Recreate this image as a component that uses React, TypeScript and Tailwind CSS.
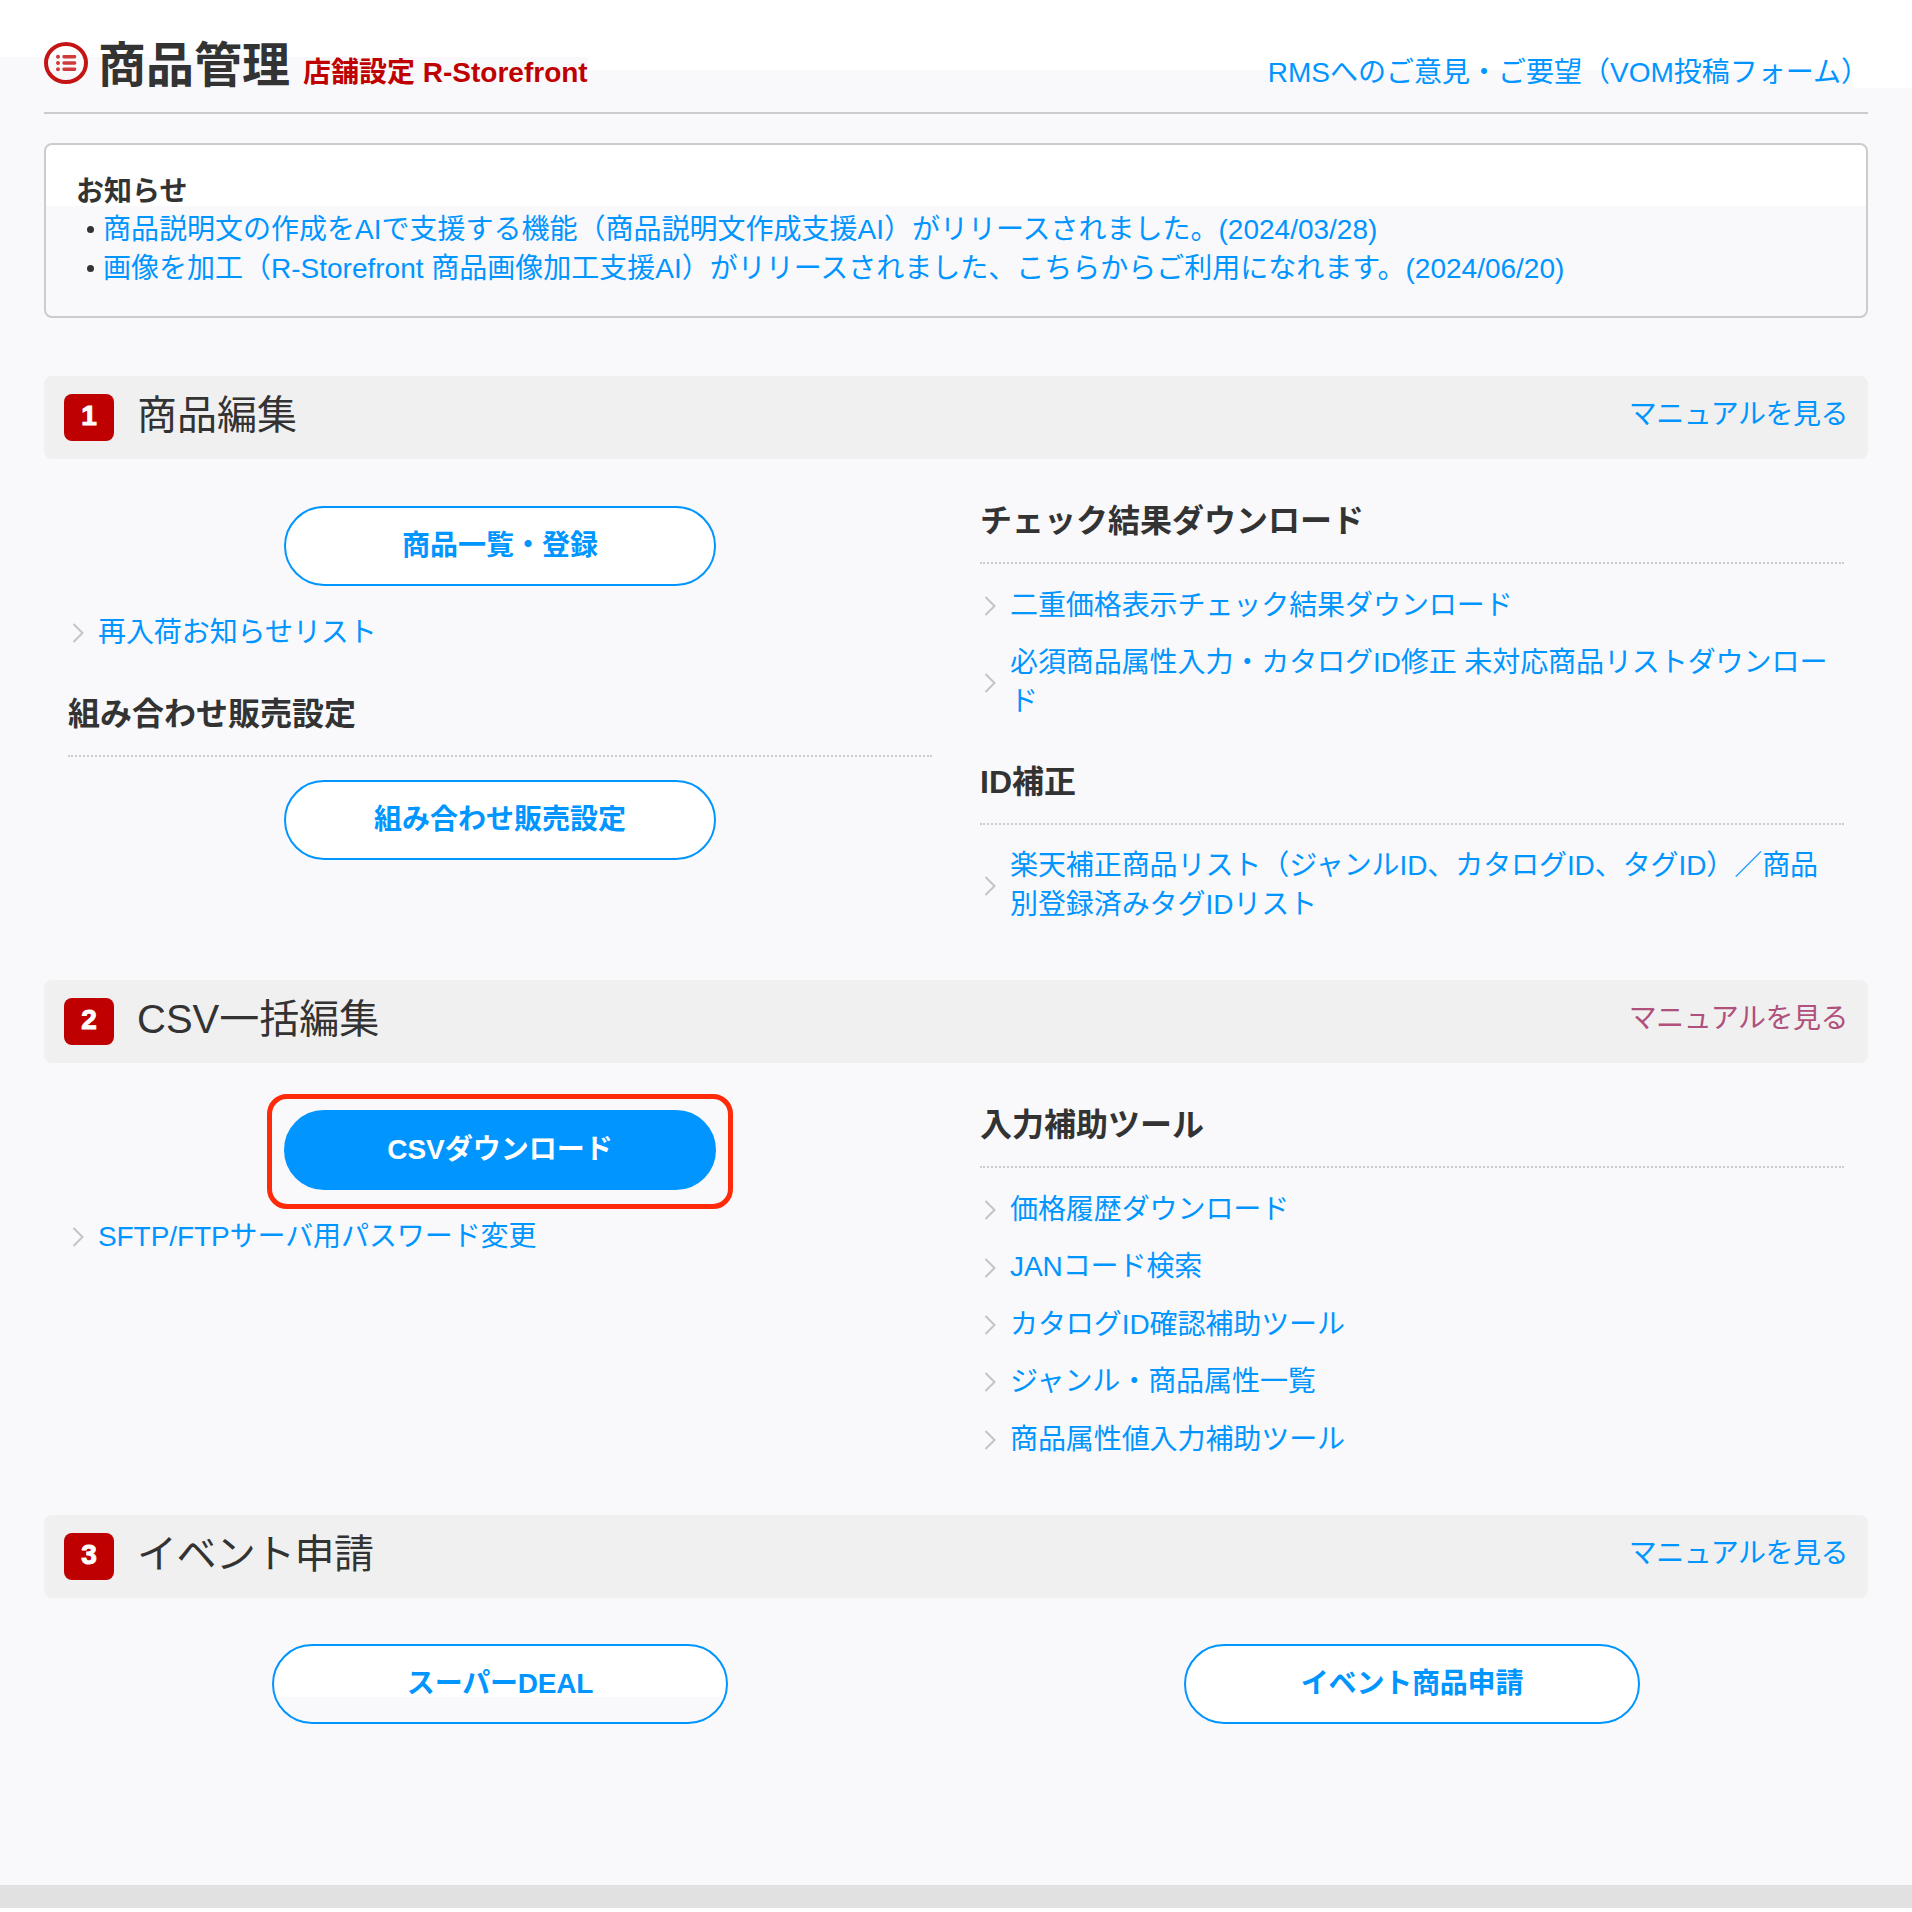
import clsx from "clsx";

type SectionHeaderProps = {
  num: number;
  title: string;
  visited?: boolean;
  tight?: boolean;
};

function ListIcon() {
  return (
    <svg width="44" height="42" viewBox="0 0 44 42" className="block shrink-0">
      <ellipse cx="22" cy="21" rx="20" ry="19" fill="none" stroke="#c41414" strokeWidth="4" />
      <g fill="#d03a3a">
        <circle cx="14" cy="14.7" r="2" />
        <circle cx="14" cy="21" r="2" />
        <circle cx="14" cy="27.3" r="2" />
        <rect x="18.4" y="13" width="13.8" height="3.4" rx="1.4" />
        <rect x="18.4" y="19.3" width="13.8" height="3.4" rx="1.4" />
        <rect x="18.4" y="25.6" width="13.8" height="3.4" rx="1.4" />
      </g>
    </svg>
  );
}

function SectionHeader({ num, title, visited, tight }: SectionHeaderProps) {
  return (
    <div className="flex h-[83px] items-start rounded-lg bg-[#f0f0f0] px-5">
      <span className="mt-[18px] flex h-[47px] w-[50px] items-center justify-center rounded-lg bg-[#bf0000] pb-[3px] text-[28px] font-bold text-white [-webkit-text-stroke:1px_#ffffff]">
        {num}
      </span>
      <h2
        className={clsx(
          "mt-[9px] ml-[23px] text-[40px] leading-[60px]",
          tight && "tracking-[-0.6px]"
        )}
      >
        {title}
      </h2>
      <a
        href="#"
        className={clsx(
          "mt-[19px] ml-auto text-[28px] leading-10 tracking-[-0.5px]",
          visited ? "text-[#b0507c]" : "text-[#0095ff]"
        )}
      >
        マニュアルを見る
      </a>
    </div>
  );
}

function SubHeading({ children }: { children: React.ReactNode }) {
  return (
    <h3 className="h-[59px] border-b-2 border-dotted border-[#cccccc] text-[32px] leading-8 font-bold">
      {children}
    </h3>
  );
}

type PillButtonProps = {
  label: string;
  variant?: "outline" | "primary" | "split";
  wide?: boolean;
};

function PillButton({ label, variant = "outline", wide }: PillButtonProps) {
  return (
    <button
      className={clsx(
        "mx-auto flex h-20 items-center justify-center rounded-full border-2 border-[#0095ff] pb-px text-[28px] font-bold",
        wide ? "w-[456px] tracking-[-0.2px]" : "w-[432px]",
        variant === "outline" && "bg-white text-[#0095ff]",
        variant === "primary" && "bg-[#0095ff] text-white",
        variant === "split" &&
          "bg-[linear-gradient(#ffffff_51px,#f9f9fb_51px)] text-[#0095ff]"
      )}
    >
      {label}
    </button>
  );
}

function ArrowLink({ lines }: { lines: string[] }) {
  return (
    <a href="#" className="flex items-center text-[28px] leading-[38.4px] text-[#0095ff]">
      <svg width="30" height="22" viewBox="0 0 30 22" className="shrink-0">
        <path d="M5.5 2l9 9-9 9" fill="none" stroke="#c4c4c4" strokeWidth="2" />
      </svg>
      <span>
        {lines.map((line) => (
          <span key={line} className="block tracking-[-0.08px] whitespace-nowrap">
            {line}
          </span>
        ))}
      </span>
    </a>
  );
}

const notices = [
  "商品説明文の作成をAIで支援する機能（商品説明文作成支援AI）がリリースされました。(2024/03/28)",
  "画像を加工（R-Storefront 商品画像加工支援AI）がリリースされました、こちらからご利用になれます。(2024/06/20)",
];

const tools = [
  "価格履歴ダウンロード",
  "JANコード検索",
  "カタログID確認補助ツール",
  "ジャンル・商品属性一覧",
  "商品属性値入力補助ツール",
];

export default function App() {
  return (
    <div className="flex h-[1912px] w-[1912px] flex-col bg-white font-['Liberation_Sans','Noto_Sans_CJK_JP',sans-serif] text-[#333333]">
      <div className="h-[1885px] bg-[#f9f9fb] bg-[linear-gradient(#ffffff,#ffffff),linear-gradient(#ffffff,#ffffff),linear-gradient(#ffffff,#ffffff)] bg-[length:100%_57px,1324px_70px,60px_88px] bg-[position:0_0,100%_0,100%_0] bg-no-repeat px-11">
        <header className="flex h-[114px] items-start border-b-2 border-[#cccccc]">
          <div className="mt-[42px]">
            <ListIcon />
          </div>
          <h1 className="mt-[36px] ml-[10px] text-[48px] leading-[60px] font-bold">商品管理</h1>
          <p className="mt-[53px] ml-[13px] text-[28px] leading-10 font-bold text-[#bf0000]">
            店舗設定 R-Storefront
          </p>
          <a href="#" className="mt-[53px] -mr-px ml-auto text-[28px] leading-10 text-[#0095ff]">
            RMSへのご意見・ご要望（VOM投稿フォーム）
          </a>
        </header>

        <section className="mt-[29px] h-[175px] rounded-lg border-2 border-[#cccccc] bg-[linear-gradient(#ffffff_61px,#f9f9fb_61px)] px-[30px] pt-[28px]">
          <h2 className="text-[28px] leading-[38.4px] font-bold">お知らせ</h2>
          <ul>
            {notices.map((notice) => (
              <li key={notice} className="flex items-center text-[28px] leading-[38.4px]">
                <span className="mr-[9px] mb-[2px] ml-[11px] size-[7px] rounded-full bg-[#333333]"></span>
                <a href="#" className="whitespace-nowrap text-[#0095ff]">
                  {notice}
                </a>
              </li>
            ))}
          </ul>
        </section>

        <section className="mt-[58px] h-[604px]">
          <SectionHeader num={1} title="商品編集" />
          <div className="flex gap-12 px-6 pt-[47px]">
            <div className="w-[864px]">
              <PillButton label="商品一覧・登録" />
              <div className="mt-[28px] mb-[46px]">
                <ArrowLink lines={["再入荷お知らせリスト"]} />
              </div>
              <SubHeading>組み合わせ販売設定</SubHeading>
              <div className="mt-[23px]">
                <PillButton label="組み合わせ販売設定" />
              </div>
            </div>
            <div className="-mt-px w-[864px]">
              <SubHeading>チェック結果ダウンロード</SubHeading>
              <div className="mt-[23px] flex flex-col gap-[19px]">
                <ArrowLink lines={["二重価格表示チェック結果ダウンロード"]} />
                <ArrowLink
                  lines={["必須商品属性入力・カタログID修正 未対応商品リストダウンロー", "ド"]}
                />
              </div>
              <div className="mt-[45px] mb-[22px]">
                <SubHeading>ID補正</SubHeading>
              </div>
              <ArrowLink
                lines={[
                  "楽天補正商品リスト（ジャンルID、カタログID、タグID）／商品",
                  "別登録済みタグIDリスト",
                ]}
              />
            </div>
          </div>
        </section>

        <section className="h-[535px]">
          <SectionHeader num={2} title="CSV一括編集" visited />
          <div className="flex gap-12 px-6 pt-[47px]">
            <div className="w-[864px]">
              <div className="mx-auto -mt-4 h-[115px] w-[466px] rounded-[20px] border-[5px] border-[#ff2a0a] pt-[11px]">
                <PillButton label="CSVダウンロード" variant="primary" />
              </div>
              <div className="mt-[9px]">
                <ArrowLink lines={["SFTP/FTPサーバ用パスワード変更"]} />
              </div>
            </div>
            <div className="-mt-px w-[864px]">
              <SubHeading>入力補助ツール</SubHeading>
              <div className="mt-[23px] flex flex-col gap-[19px]">
                {tools.map((tool) => (
                  <ArrowLink key={tool} lines={[tool]} />
                ))}
              </div>
            </div>
          </div>
        </section>

        <section>
          <SectionHeader num={3} title="イベント申請" tight />
          <div className="grid grid-cols-2 pt-[46px]">
            <PillButton label="スーパーDEAL" variant="split" wide />
            <PillButton label="イベント商品申請" wide />
          </div>
        </section>
      </div>
      <footer className="h-[23px] bg-[#e1e1e1]"></footer>
    </div>
  );
}
